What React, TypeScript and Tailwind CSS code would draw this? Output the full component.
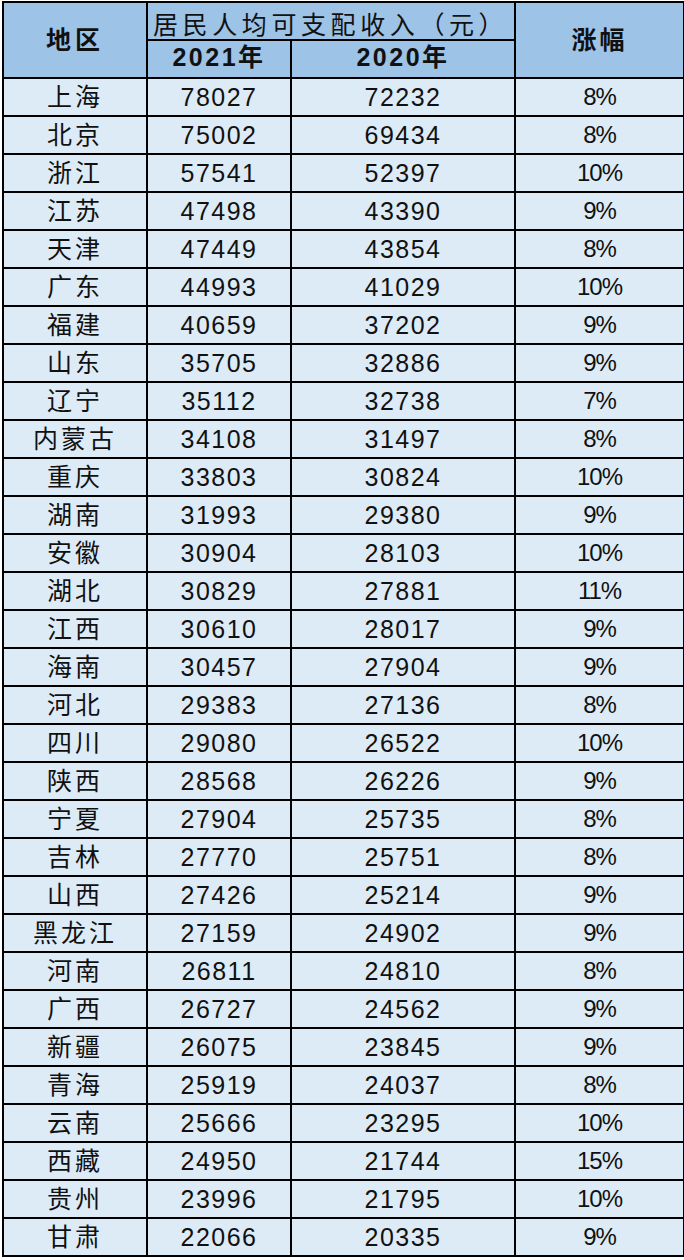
const rows: [string, string, string, string][] = [
  ["上海", "78027", "72232", "8%"],
  ["北京", "75002", "69434", "8%"],
  ["浙江", "57541", "52397", "10%"],
  ["江苏", "47498", "43390", "9%"],
  ["天津", "47449", "43854", "8%"],
  ["广东", "44993", "41029", "10%"],
  ["福建", "40659", "37202", "9%"],
  ["山东", "35705", "32886", "9%"],
  ["辽宁", "35112", "32738", "7%"],
  ["内蒙古", "34108", "31497", "8%"],
  ["重庆", "33803", "30824", "10%"],
  ["湖南", "31993", "29380", "9%"],
  ["安徽", "30904", "28103", "10%"],
  ["湖北", "30829", "27881", "11%"],
  ["江西", "30610", "28017", "9%"],
  ["海南", "30457", "27904", "9%"],
  ["河北", "29383", "27136", "8%"],
  ["四川", "29080", "26522", "10%"],
  ["陕西", "28568", "26226", "9%"],
  ["宁夏", "27904", "25735", "8%"],
  ["吉林", "27770", "25751", "8%"],
  ["山西", "27426", "25214", "9%"],
  ["黑龙江", "27159", "24902", "9%"],
  ["河南", "26811", "24810", "8%"],
  ["广西", "26727", "24562", "9%"],
  ["新疆", "26075", "23845", "9%"],
  ["青海", "25919", "24037", "8%"],
  ["云南", "25666", "23295", "10%"],
  ["西藏", "24950", "21744", "15%"],
  ["贵州", "23996", "21795", "10%"],
  ["甘肃", "22066", "20335", "9%"],
]

const font = { fontFamily: '"Liberation Sans", "Noto Sans CJK SC", sans-serif' }

export default function App() {
  return (
    <div className="w-[684px] h-[1260px] bg-white pl-[2px] pt-[1px]" style={font}>
      <table className="w-[681px] table-fixed border-collapse border-2 border-black text-[#111]">
        <colgroup>
          <col className="w-[144px]" />
          <col className="w-[144px]" />
          <col className="w-[224px]" />
          <col className="w-[169px]" />
        </colgroup>
        <thead className="bg-[#9dc3e6] font-bold">
          <tr className="h-[38px]">
            <th rowSpan={2} className="border-2 border-black p-0 text-[25px] tracking-[4px] leading-none font-bold">
              地区
            </th>
            <th colSpan={2} className="border-2 border-black p-0 pt-[8px] text-left pl-[5px] text-[25px] tracking-[4.6px] leading-none font-normal">
              居民人均可支配收入（元）
            </th>
            <th rowSpan={2} className="border-2 border-black p-0 text-[25px] tracking-[3px] leading-none font-bold">
              涨幅
            </th>
          </tr>
          <tr className="h-[38px]">
            <th className="border-2 border-black p-0 pb-[4px] text-[25px] tracking-[2.5px] leading-none font-bold">2021年</th>
            <th className="border-2 border-black p-0 pb-[4px] text-[25px] tracking-[2.5px] leading-none font-bold">2020年</th>
          </tr>
        </thead>
        <tbody className="bg-[#ddebf7]">
          {rows.map(([region, y21, y20, pct]) => (
            <tr key={region} className="h-[38px]">
              <td className="border-2 border-black p-0 text-center text-[25px] tracking-[3px] leading-none">{region}</td>
              <td className="border-2 border-black p-0 text-center text-[25px] tracking-[1.5px] leading-none">{y21}</td>
              <td className="border-2 border-black p-0 text-center text-[25px] tracking-[1.5px] leading-none">{y20}</td>
              <td className="border-2 border-black p-0 text-center text-[24px] tracking-[-1px] leading-none">{pct}</td>
            </tr>
          ))}
        </tbody>
      </table>
    </div>
  )
}
